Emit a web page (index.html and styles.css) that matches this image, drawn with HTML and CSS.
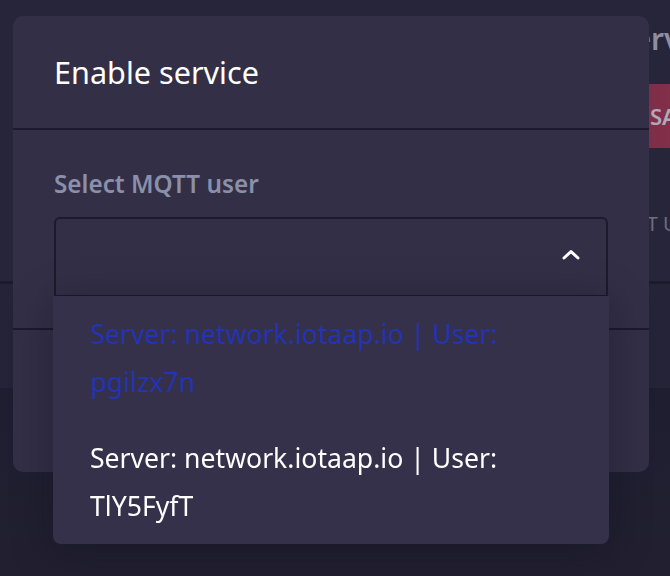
FILE: index.html
```html
<!DOCTYPE html>
<html lang="en">
<head>
<meta charset="utf-8">
<title>Enable service</title>
<link rel="stylesheet" href="styles.css">
</head>
<body>
<div class="page">
  <section class="page-top">
    <h1 class="page-title">Services</h1>
    <div class="page-actions"><button class="btn-save" type="button">SAVE</button></div>
    <div class="page-field">MQTT User</div>
  </section>
  <section class="page-mid"></section>
  <section class="page-bottom"></section>
</div>

<div class="overlay">
  <div class="modal" role="dialog">
    <div class="modal-header">
      <h2 class="modal-title">Enable service</h2>
    </div>
    <div class="modal-body">
      <div class="field-label">Select MQTT user</div>
      <div class="select">
        <div class="select-box">
          <svg class="chevron" width="18" height="11" viewBox="0 0 18 11" aria-hidden="true">
            <polyline points="2,9 9,2.5 16,9" fill="none" stroke="#ffffff" stroke-width="3" stroke-linecap="round" stroke-linejoin="round"/>
          </svg>
        </div>
        <ul class="dropdown">
          <li class="option option-active">Server: network.iotaap.io | User: pgilzx7n</li>
          <li class="option">Server: network.iotaap.io | User: TlY5FyfT</li>
        </ul>
      </div>
    </div>
    <div class="modal-footer"></div>
  </div>
</div>
</body>
</html>
```

FILE: styles.css
```css
* { box-sizing: border-box; }

html, body {
  margin: 0;
  padding: 0;
  width: 670px;
  height: 576px;
  overflow: hidden;
  background: #1f1e30;
  font-family: "Noto Sans", "Open Sans", sans-serif;
}

/* dimmed page behind the dialog */
.page {
  display: flex;
  flex-direction: column;
  height: 576px;
}

.page-top {
  height: 284px;
  background: #27253a;
  border-bottom: 3px solid #1c1b2d;
  padding: 14px 0 0 617px;
  white-space: nowrap;
}

.page-title {
  margin: 0;
  font-size: 30px;
  line-height: 50px;
  font-weight: 600;
  color: #8f8da0;
}

.page-actions {
  margin-top: 20px;
  margin-left: 15px;
}

.btn-save {
  height: 64px;
  padding: 0 18px;
  border: 0;
  border-radius: 4px;
  background: linear-gradient(90deg, #7a2c45, #8d3550);
  color: #b0a9b8;
  font-family: "Noto Sans", "Open Sans", sans-serif;
  font-size: 22px;
  font-weight: 600;
}

.page-field {
  margin-top: 62px;
  margin-left: -15px;
  font-size: 20px;
  color: #6f6d80;
}

.page-mid {
  height: 104px;
  background: #252338;
}

.page-bottom {
  flex: 1;
  background: linear-gradient(180deg, #1f1e31, #222030);
}

/* dialog overlay */
.overlay {
  position: fixed;
  inset: 0;
  padding: 16px 0 0 13px;
}

.modal {
  width: 636px;
  background: #332f47;
  border-radius: 10px;
  color: #ffffff;
}

.modal-header {
  height: 114px;
  padding: 0 41px;
  display: flex;
  align-items: center;
  border-bottom: 2px solid #1c1a2c;
}

.modal-title {
  margin: 0;
  font-size: 30.6px;
  font-weight: 400;
  line-height: 40px;
  color: #ffffff;
}

.modal-body {
  padding: 36px 41px 31px;
  border-bottom: 2px solid #1c1a2c;
}

.field-label {
  font-size: 24.3px;
  font-weight: 600;
  line-height: 36px;
  color: #8a90a9;
  margin-bottom: 15px;
}

.select {
  position: relative;
}

.select-box {
  height: 80px;
  border: 2px solid #1c1a2c;
  border-radius: 6px 6px 0 0;
  background: #332f47;
  display: flex;
  align-items: center;
  justify-content: flex-end;
  padding-right: 26px;
}

.chevron {
  display: block;
  margin-top: -6px;
}

.modal-footer {
  height: 142px;
}

/* open dropdown list (floats over the footer) */
.dropdown {
  position: absolute;
  top: 79px;
  left: -1px;
  right: -1px;
  margin: 0;
  padding: 0;
  list-style: none;
  background: #35314a;
  border-radius: 0 0 8px 8px;
  box-shadow: 0 6px 40px rgba(10, 10, 25, 0.35);
  z-index: 2;
}

.option {
  padding: 14px 37px;
  font-size: 26.6px;
  line-height: 48px;
  color: #ffffff;
}

.option-active {
  color: #2434b8;
}
```
